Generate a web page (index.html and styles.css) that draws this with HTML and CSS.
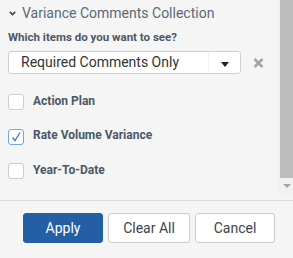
FILE: index.html
```html
<!DOCTYPE html>
<html>
<head>
<meta charset="utf-8">
<link rel="stylesheet" href="styles.css">
</head>
<body>
<div class="panel">
  <div class="scroll">
    <div class="content">
      <div class="header">
        <svg class="chev" width="7" height="5" viewBox="0 0 7 5"><path d="M0.8 0.8 L3.5 3.5 L6.2 0.8" fill="none" stroke="#3d4b58" stroke-width="1.7"/></svg>
        <span class="title">Variance Comments Collection</span>
      </div>
      <div class="question">Which items do you want to see?</div>
      <div class="select-row">
        <div class="select">
          <span class="select-text">Required Comments Only</span>
          <span class="select-btn"><svg width="8" height="5" viewBox="0 0 8 5"><path d="M0 0 H8 L4 5 Z" fill="#222"/></svg></span>
        </div>
        <svg class="clear-x" width="11" height="10" viewBox="0 0 11 10"><path d="M1.5 1 L9.5 9 M9.5 1 L1.5 9" stroke="#9ba6ae" stroke-width="2.6" stroke-linecap="butt"/></svg>
      </div>
      <div class="items">
        <label class="item"><span class="box"></span><span class="lbl">Action Plan</span></label>
        <label class="item"><span class="box checked"><svg width="12" height="12" viewBox="0 0 12 12"><path d="M2.5 6.5 L5 9.5 L10 1.5" fill="none" stroke="#3d7fd0" stroke-width="1.4"/></svg></span><span class="lbl">Rate Volume Variance</span></label>
        <label class="item"><span class="box"></span><span class="lbl">Year-To-Date</span></label>
      </div>
    </div>
    <div class="scrollbar">
      <div class="thumb"></div>
      <div class="arrow"><svg width="8" height="4" viewBox="0 0 8 4"><path d="M0 0 H8 L4 4 Z" fill="#a3a3a3"/></svg></div>
    </div>
  </div>
  <div class="footer">
    <button class="btn primary">Apply</button>
    <button class="btn">Clear All</button>
    <button class="btn">Cancel</button>
  </div>
</div>
</body>
</html>
```
FILE: styles.css
```css
html, body {
  margin: 0;
  padding: 0;
  background: #f5f5f5;
}
body {
  font-family: Roboto, "Liberation Sans", sans-serif;
  width: 293px;
  height: 258px;
  overflow: hidden;
}
.panel {
  display: flex;
  flex-direction: column;
  height: 258px;
}
.scroll {
  display: flex;
  height: 195px;
  overflow: hidden;
}
.content {
  flex: 1;
  padding-left: 8px;
}
.header {
  display: flex;
  align-items: center;
  height: 24px;
}
.chev {
  margin-left: 1px;
  margin-right: 6px;
  margin-top: 2px;
}
.title {
  font-size: 14px;
  line-height: 24px;
  color: #5a6977;
  margin-top: 1px;
}
.question {
  margin-top: 5px;
  font-size: 11.5px;
  line-height: 16px;
  font-weight: bold;
  color: #4a5866;
}
.select-row {
  display: flex;
  align-items: center;
  margin-top: 6px;
}
.select {
  display: flex;
  align-items: stretch;
  width: 233px;
  height: 23px;
  box-sizing: border-box;
  background: #fff;
  border: 1px solid #cfcfcf;
  border-radius: 3px;
}
.select-text {
  flex: 1;
  padding-left: 12px;
  font-size: 14px;
  line-height: 21px;
  color: #333;
}
.select-btn {
  width: 31px;
  border-left: 1px solid #efefef;
  display: flex;
  align-items: center;
  justify-content: center;
  padding-top: 3px;
}
.clear-x {
  margin-left: 12px;
  margin-top: 0px;
}
.items {
  margin-top: 11px;
  display: flex;
  flex-direction: column;
}
.item {
  display: flex;
  align-items: center;
  height: 34.5px;
}
.box {
  width: 16px;
  height: 16px;
  box-sizing: border-box;
  border: 1px solid #cccccc;
  border-radius: 3px;
  background: #fff;
  display: flex;
  align-items: center;
  justify-content: center;
}
.box.checked {
  border-color: #7aa6d9;
}
.lbl {
  margin-left: 9px;
  font-size: 12px;
  font-weight: bold;
  color: #4a5866;
  margin-top: -3px;
}
.scrollbar {
  width: 15px;
  background: #f1f1f1;
  display: flex;
  flex-direction: column;
}
.thumb {
  height: 178px;
  margin-left: 2px;
  background: #bdbdbd;
}
.arrow {
  flex: 1;
  display: flex;
  justify-content: center;
  padding-top: 6px;
  padding-left: 2px;
}
.footer {
  margin-top: 5px;
  border-top: 1px solid #d8dee1;
  display: flex;
  justify-content: flex-end;
  gap: 5px;
  padding: 12px 18px 0 0;
  flex: 1;
}
.btn {
  height: 30px;
  box-sizing: border-box;
  padding: 0;
  width: 80px;
  font-family: Roboto, "Liberation Sans", sans-serif;
  font-size: 14px;
  color: #3a4550;
  background: #fff;
  border: 1px solid #cccccc;
  border-radius: 3px;
}
.btn:nth-child(2) {
  width: 82px;
}
.btn.primary {
  background: #245fa5;
  border-color: #245fa5;
  color: #fff;
}
```
